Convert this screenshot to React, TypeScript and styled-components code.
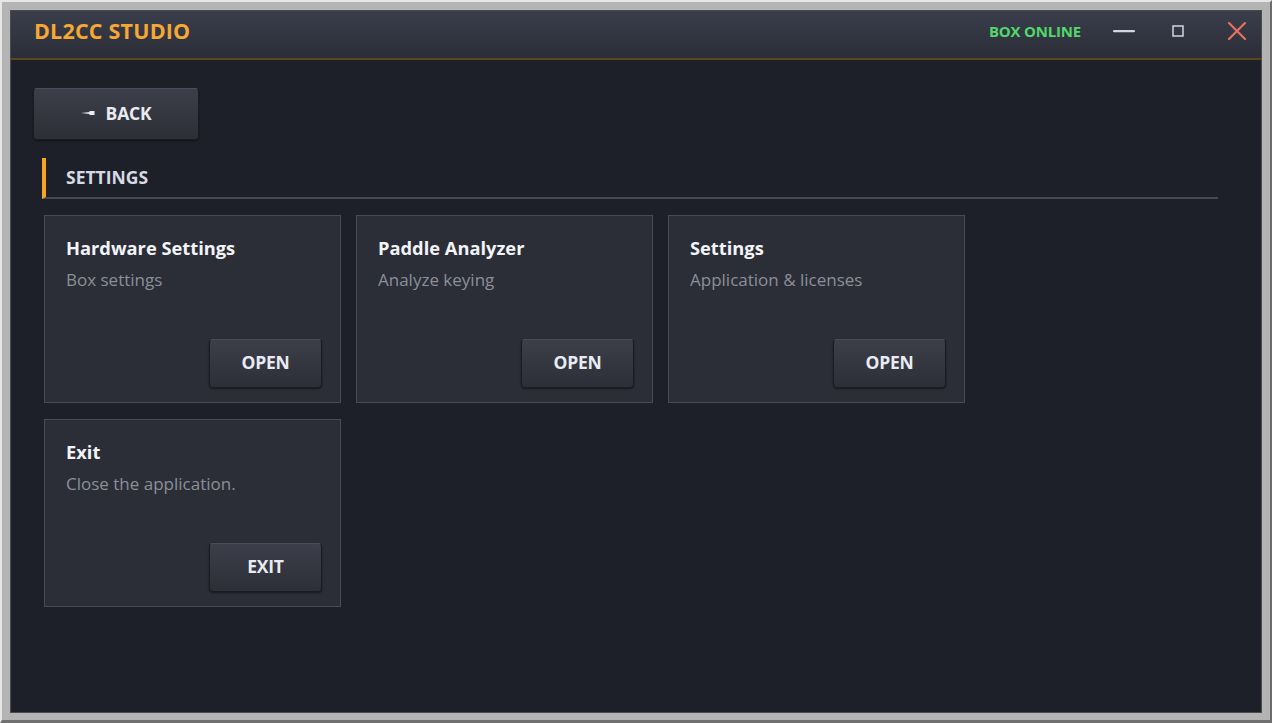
import { createGlobalStyle } from 'styled-components'
import styled from 'styled-components'

const GlobalStyle = createGlobalStyle`
  html, body {
    margin: 0;
    padding: 0;
    background: #b4b4b4;
  }
  * {
    box-sizing: border-box;
  }
`

const Frame = styled.div`
  width: 1272px;
  height: 723px;
  background: #b4b4b4;
  border-top: 2px solid #e6e6e6;
  border-left: 2px solid #e6e6e6;
  border-right: 2px solid #6c6c6c;
  border-bottom: 3px solid #707070;
  padding: 8px 8px 7px 8px;
  display: flex;
  font-family: 'Open Sans', 'Noto Sans', sans-serif;
`

const Window = styled.div`
  flex: 1;
  display: flex;
  flex-direction: column;
  border: 1px solid #4c4c4c;
  background: #1e2029;
  overflow: hidden;
`

const TitleBar = styled.header`
  height: 49px;
  flex-shrink: 0;
  display: flex;
  align-items: center;
  padding: 0 0 8px 23px;
  background: linear-gradient(180deg, #3a3e4b 0%, #2b2e38 100%);
  border-bottom: 2px solid #5a4620;
`

const AppTitle = styled.div`
  color: #f5a833;
  font-size: 21.5px;
  font-weight: 700;
  letter-spacing: 0.2px;
  flex: 1;
`

const Status = styled.div`
  color: #52d86a;
  font-size: 15px;
  font-weight: 700;
  letter-spacing: -0.2px;
  margin-right: 16px;
`

const WinButton = styled.button<{ $w: number; $gap?: number }>`
  width: ${p => p.$w}px;
  margin-left: ${p => p.$gap ?? 0}px;
  height: 30px;
  border: none;
  background: transparent;
  padding: 0;
  display: flex;
  align-items: center;
  justify-content: center;
  cursor: pointer;
`

const Content = styled.main`
  flex: 1;
  padding: 28px 43px 0 22px;
  display: flex;
  flex-direction: column;
  align-items: flex-start;
`

const RaisedButton = styled.button<{ $w: number; $h: number }>`
  width: ${p => p.$w}px;
  height: ${p => p.$h}px;
  display: flex;
  align-items: center;
  justify-content: center;
  gap: 11px;
  padding: 0 0 3px 0;
  border: 1px solid #1a1c22;
  border-top-color: #4a4e58;
  border-radius: 4px;
  background: linear-gradient(180deg, #3c3f49 0%, #2c2f37 100%);
  box-shadow: 0 1px 2px rgba(0, 0, 0, 0.45);
  color: #e8ebf2;
  font-family: 'Open Sans', 'Noto Sans', sans-serif;
  font-size: 17.5px;
  font-weight: 700;
  letter-spacing: -0.2px;
  cursor: pointer;
`

const SectionHeader = styled.div`
  align-self: stretch;
  margin: 18px 0 0 9px;
  height: 41px;
  border-left: 4px solid #f5a623;
  border-bottom: 2px solid #454955;
  display: flex;
  align-items: center;
  padding: 0 0 1px 20px;
  color: #d6dae4;
  font-size: 17.5px;
  font-weight: 700;
`

const CardGrid = styled.div`
  margin: 16px 0 0 11px;
  display: grid;
  grid-template-columns: repeat(3, 297px);
  grid-auto-rows: 188px;
  column-gap: 15px;
  row-gap: 16px;
`

const Card = styled.section`
  display: flex;
  flex-direction: column;
  padding: 19px 18px 14px 21px;
  background: #2b2e37;
  border: 1px solid #474b56;
`

const CardTitle = styled.div`
  color: #f2f4f8;
  font-size: 18.3px;
  font-weight: 700;
  line-height: 26px;
`

const CardText = styled.div`
  margin-top: 8px;
  color: #8b8f99;
  font-size: 17px;
  line-height: 22px;
  flex: 1;
`

const CardFooter = styled.div`
  display: flex;
  justify-content: flex-end;
`

const BackArrow = () => (
  <svg width="14" height="6" viewBox="0 0 14 6">
    <path d="M0 3 L9 2 L9 4 Z" fill="#e8ebf2" />
    <rect x="8.5" y="1" width="5" height="4" fill="#e8ebf2" />
  </svg>
)

const cards = [
  { title: 'Hardware Settings', text: 'Box settings', action: 'OPEN' },
  { title: 'Paddle Analyzer', text: 'Analyze keying', action: 'OPEN' },
  { title: 'Settings', text: 'Application & licenses', action: 'OPEN' },
  { title: 'Exit', text: 'Close the application.', action: 'EXIT' },
]

export default function App() {
  return (
    <>
      <GlobalStyle />
      <Frame>
        <Window>
          <TitleBar>
            <AppTitle>DL2CC STUDIO</AppTitle>
            <Status>BOX ONLINE</Status>
            <WinButton $w={54} aria-label="Minimize">
              <svg width="24" height="4" viewBox="0 0 24 4">
                <rect x="1" y="1" width="22" height="2.2" rx="1" fill="#d3d6de" />
              </svg>
            </WinButton>
            <WinButton $w={54} aria-label="Maximize">
              <svg width="12" height="12" viewBox="0 0 12 12">
                <rect x="1" y="1" width="10" height="10" fill="none" stroke="#c9ccd4" strokeWidth="1.6" />
              </svg>
            </WinButton>
            <WinButton $w={48} $gap={8} aria-label="Close">
              <svg width="20" height="18" viewBox="0 0 20 18">
                <path d="M2 1 L18 17 M18 1 L2 17" stroke="#e8705f" strokeWidth="2.2" strokeLinecap="round" />
              </svg>
            </WinButton>
          </TitleBar>
          <Content>
            <RaisedButton $w={166} $h={52}>
              <BackArrow />
              BACK
            </RaisedButton>
            <SectionHeader>SETTINGS</SectionHeader>
            <CardGrid>
              {cards.map(c => (
                <Card key={c.title}>
                  <CardTitle>{c.title}</CardTitle>
                  <CardText>{c.text}</CardText>
                  <CardFooter>
                    <RaisedButton $w={113} $h={49}>{c.action}</RaisedButton>
                  </CardFooter>
                </Card>
              ))}
            </CardGrid>
          </Content>
        </Window>
      </Frame>
    </>
  )
}
